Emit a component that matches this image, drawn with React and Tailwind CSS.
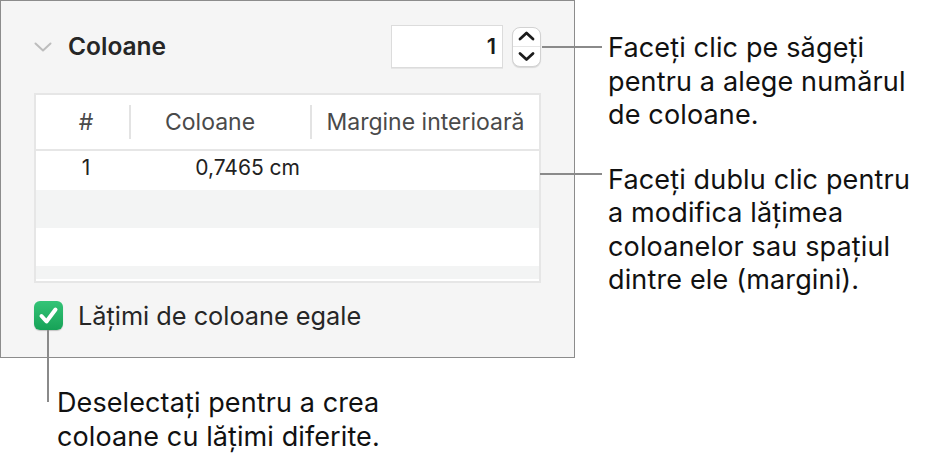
import React from "react";

function Chevron() {
  return (
    <svg width="18" height="10" viewBox="0 0 18 10" className="shrink-0">
      <path d="M1.5 1.5 L9 8.5 L16.5 1.5" fill="none" stroke="#bdbdbd" strokeWidth="2" strokeLinecap="round" strokeLinejoin="round" />
    </svg>
  );
}

function Stepper() {
  return (
    <div className="relative w-[29px] h-[40px] rounded-[8px] bg-white border border-[#d2d2d2] shadow-[0_1px_1px_rgba(0,0,0,0.12)] ml-[9px]">
      <svg width="29" height="40" viewBox="0 0 29 40" className="absolute -left-px -top-px">
        <line x1="1" y1="19.5" x2="28" y2="19.5" stroke="#e6e6e6" strokeWidth="1" />
        <path d="M8 12 L14.5 6 L21 12" fill="none" stroke="#1c1c1c" strokeWidth="2.8" strokeLinecap="round" strokeLinejoin="round" />
        <path d="M8 26.5 L14.5 32.5 L21 26.5" fill="none" stroke="#1c1c1c" strokeWidth="2.8" strokeLinecap="round" strokeLinejoin="round" />
      </svg>
    </div>
  );
}

function Checkbox() {
  return (
    <div className="w-[29px] h-[29px] rounded-[6px] bg-gradient-to-b from-[#33c477] to-[#16a257] shadow-[0_1px_1px_rgba(0,0,0,0.2)] flex items-center justify-center shrink-0">
      <svg width="29" height="29" viewBox="0 0 29 29">
        <path d="M7.5 15 L12.5 20.5 L21.5 8.5" fill="none" stroke="#ffffff" strokeWidth="4" strokeLinecap="round" strokeLinejoin="round" />
      </svg>
    </div>
  );
}

export default function App() {
  return (
    <div className="relative w-[928px] h-[463px] bg-white overflow-hidden font-['Inter',sans-serif] text-[#1a1a1a]">
      <div className="flex">
        {/* Panel */}
        <div className="w-[575px] h-[358px] border border-[#8c8c8c] bg-[#f5f5f5] shrink-0 pt-[24px] px-[33px]">
          {/* Header row */}
          <div className="flex items-center h-[43px]">
            <Chevron />
            <div className="ml-[16px] text-[24.5px] font-semibold text-[#262626] leading-none">Coloane</div>
            <div className="ml-auto flex items-center">
              <div className="w-[112px] h-[43px] bg-white border border-[#dcdcdc] shadow-[0_1px_0_rgba(0,0,0,0.06)] flex items-center justify-end pr-[6px] text-[22px] font-semibold text-[#1a1a1a]">
                1
              </div>
              <Stepper />
            </div>
          </div>

          {/* Table */}
          <div className="mt-[25px] w-[507px] h-[190px] border-2 border-[#e6e6e6] bg-white overflow-hidden">
            <div className="flex h-[56px] items-center border-b-2 border-[#e6e6e6] text-[23px] text-[#4a4a4a]">
              <div className="w-[93px] text-center pl-[7px]">#</div>
              <div className="w-[2px] h-[34px] bg-[#e3e3e3]" />
              <div className="w-[179px] pl-[34px]">Coloane</div>
              <div className="w-[2px] h-[34px] bg-[#e3e3e3]" />
              <div className="flex-1 text-center">Margine interioară</div>
            </div>
            <div className="flex h-[39px] items-start pt-[6px] text-[21px] leading-[21px] text-[#222]">
              <div className="w-[93px] text-center pl-[7px]">1</div>
              <div className="w-[181px] text-right pr-[10px]">0,7465 cm</div>
            </div>
            <div className="h-[38px] bg-[#f3f4f4]" />
            <div className="h-[38px] bg-white" />
            <div className="h-[13px] bg-[#f3f4f4]" />
          </div>

          {/* Checkbox */}
          <div className="mt-[18px] flex items-center">
            <Checkbox />
            <div className="ml-[15px] text-[25.3px] text-[#262626] leading-none">Lățimi de coloane egale</div>
          </div>
        </div>

        {/* Right callouts */}
        <div className="ml-[33px] pt-[31px] text-[27px] tracking-[0.15px] leading-[33.5px] text-[#111]">
          <div>
            Faceți clic pe săgeți
            <br />
            pentru a alege numărul
            <br />
            de coloane.
          </div>
          <div className="mt-[31px]">
            Faceți dublu clic pentru
            <br />
            a modifica lățimea
            <br />
            coloanelor sau spațiul
            <br />
            dintre ele (margini).
          </div>
        </div>
      </div>

      {/* Bottom callout */}
      <div className="pl-[57px] pt-[28px] text-[27px] tracking-[0.1px] leading-[33.5px] text-[#111]">
        Deselectați pentru a crea
        <br />
        coloane cu lățimi diferite.
      </div>

      {/* Leader lines */}
      <div className="absolute left-[542px] top-[46px] w-[60px] h-[2px] bg-[#8a8a8a]" />
      <div className="absolute left-[540px] top-[173px] w-[62px] h-[2px] bg-[#8a8a8a]" />
      <div className="absolute left-[47px] top-[330px] w-[2px] h-[72px] bg-[#8a8a8a]" />
    </div>
  );
}
